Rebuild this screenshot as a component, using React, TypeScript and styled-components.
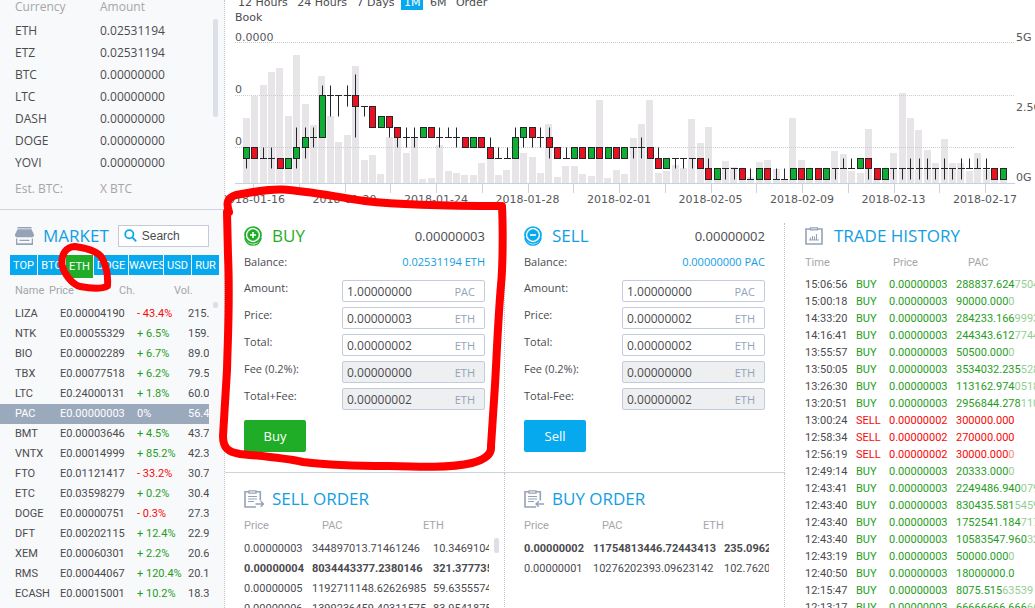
import React from 'react';
import styled, { createGlobalStyle, css } from 'styled-components';

const BLUE = '#06a8ee';
const TITLE_BLUE = '#129ee2';
const GREEN = '#1fad28';
const TEXT_GREEN = '#1f9e24';
const RED = '#f80808';
const INK = '#4b4b4f';
const MUTED = '#a6a6a8';
const STEEL = '#94a3b8';
const LINE = '#ccd4dc';

const GlobalStyle = createGlobalStyle`
  * { box-sizing: border-box; }
  body {
    margin: 0;
    background: #fff;
    color: ${INK};
    font-family: "Open Sans", "Noto Sans", sans-serif;
    font-size: 12px;
  }
  button, input { font: inherit; color: inherit; }
  h2 { margin: 0; padding: 0; font-weight: 400; }
`;

const Page = styled.div`
  position: relative;
  display: grid;
  grid-template-columns: 225px minmax(0, 1fr);
  height: 100vh;
  overflow: hidden;
`;

const Sidebar = styled.aside`
  background: #f8f9fa;
  border-right: 1px dotted #c4c8cc;
  overflow: hidden;
`;

const Main = styled.main`
  min-width: 0;
  overflow: hidden;
`;

/* ---------- tables ---------- */

const Table = styled.table`
  display: block;
  white-space: nowrap;
  overflow: hidden;
  tbody, thead { display: block; }
`;

const Row = styled.tr<{ $cols: string; $height: number; $bold?: boolean; $selected?: boolean }>`
  display: grid;
  grid-template-columns: ${p => p.$cols};
  line-height: ${p => p.$height}px;
  font-weight: ${p => (p.$bold ? 700 : 400)};
  ${p => p.$selected && css`
    background: #9ba9bd;
    && td { color: #fff; }
  `}
`;

const Head = styled.th`
  padding: 0;
  font-weight: 400;
  text-align: left;
  color: ${MUTED};
`;

type Tone = 'up' | 'down' | 'plain';
const toneColor = { up: TEXT_GREEN, down: RED, plain: INK };

const Cell = styled.td<{ $tone?: Tone }>`
  padding: 0;
  color: ${p => toneColor[p.$tone ?? 'plain']};
`;

const Faded = styled.span`
  opacity: 0.5;
`;

const Thumb = styled.span<{ $top: number; $right: number; $height: number }>`
  position: absolute;
  top: ${p => p.$top}px;
  right: ${p => p.$right}px;
  width: 5px;
  height: ${p => p.$height}px;
  border-radius: 2px;
  background: #dcdfe8;
`;

/* ---------- sidebar ---------- */

const Wallet = styled.section`
  position: relative;
  height: 210px;
  padding-left: 15px;
  border-bottom: 1px solid ${LINE};
  thead tr { margin-bottom: 6px; }
`;

const WalletFoot = styled.div`
  display: grid;
  grid-template-columns: 85px 1fr;
  margin-top: 4px;
  line-height: 22px;
  color: ${MUTED};
`;

const MarketHead = styled.div`
  display: flex;
  align-items: center;
  gap: 9px;
  height: 23px;
  margin: 14px 15px 8px;
`;

const Title = styled.h2<{ $color?: string }>`
  font-size: 17px;
  line-height: 22px;
  color: ${p => p.$color ?? TITLE_BLUE};
  white-space: nowrap;
`;

const SearchBox = styled.label`
  display: flex;
  align-items: center;
  gap: 5px;
  flex: 1;
  min-width: 0;
  height: 22px;
  padding: 0 5px;
  background: #fff;
  border: 1px solid #c5cbd6;
  svg { flex: none; }
  input {
    width: 100%;
    min-width: 0;
    padding: 0;
    border: 0;
    outline: 0;
    background: none;
    font: 12px "Liberation Sans", sans-serif;
    &::placeholder { color: ${INK}; opacity: 1; }
  }
`;

const CoinTabs = styled.nav`
  display: flex;
  gap: 1px;
  height: 23px;
  margin: 0 5px 1px 10px;
`;

const CoinTab = styled.button<{ $active?: boolean; $wide?: boolean }>`
  width: ${p => (p.$wide ? 34 : 27)}px;
  height: ${p => (p.$active ? 23 : 20)}px;
  padding: 0;
  border: 0;
  background: ${p => (p.$active ? GREEN : BLUE)};
  color: #fff;
  font: 11px "Roboto", sans-serif;
  white-space: nowrap;
`;

const MarketList = styled.div`
  position: relative;
  padding-right: 15px;
  font: 11px "Roboto", sans-serif;
  thead tr { margin-bottom: 1px; }
  th:first-child, td:first-child { padding-left: 15px; }
`;

/* ---------- chart ---------- */

const ChartPanel = styled.section`
  padding-top: 1px;
  margin-top: -6px;
`;

const Ranges = styled.nav`
  width: 270px;
  padding-left: 10px;
  font: 11px/15px "DejaVu Sans", sans-serif;
`;

const Range = styled.a<{ $active?: boolean }>`
  padding: 1px 3px;
  color: ${p => (p.$active ? '#fff' : INK)};
  background: ${p => (p.$active ? BLUE : 'none')};
  text-decoration: none;
`;

const ChartSvg = styled.svg`
  display: block;
  width: 100%;
  overflow: visible;
  text { font: 11px "DejaVu Sans", sans-serif; fill: #58585c; }
`;

/* ---------- panels ---------- */

const Panels = styled.div`
  display: grid;
  grid-template-columns: minmax(0, 28fr) minmax(0, 28fr) minmax(0, 25fr);
  grid-template-rows: 250px 400px;
  margin-top: 15px;
`;

const Panel = styled.section`
  position: relative;
  padding: 2px 19px 0;
  border-right: 1px dotted #bcc3cc;
  border-bottom: 1px solid ${LINE};
`;

const OrderPanel = styled(Panel)`
  padding: 15px 15px 0 19px;
`;

const TradesPanel = styled.section`
  grid-column: 3;
  grid-row: 1 / span 2;
  padding: 2px 0 0 20px;
  overflow: hidden;
`;

const PanelHead = styled.header<{ $gap?: number }>`
  display: flex;
  align-items: center;
  gap: ${p => p.$gap ?? 8}px;
  height: 22px;
  output { margin-left: auto; font-size: 13px; }
`;

const Balance = styled.div`
  display: flex;
  justify-content: space-between;
  margin-bottom: 8px;
  padding-top: 5px;
  font-size: 11px;
  line-height: 20px;
  b { font-weight: 400; color: ${TITLE_BLUE}; }
`;

const Field = styled.div`
  display: flex;
  justify-content: space-between;
  height: 22px;
  margin-bottom: 5px;
  label { font-size: 11px; line-height: 16px; }
`;

const Entry = styled.div<{ $locked?: boolean }>`
  display: flex;
  align-items: center;
  width: 143px;
  padding: 0 9px 0 4px;
  border: 1px solid #c3ccdd;
  border-radius: 2px;
  background: ${p => (p.$locked ? '#eeeff1' : '#fff')};
  input {
    flex: 1;
    min-width: 0;
    padding: 0;
    border: 0;
    outline: 0;
    background: none;
    font-size: 12px;
  }
  span { font-size: 11px; color: ${STEEL}; }
`;

const Submit = styled.button<{ $color: string }>`
  width: 62px;
  height: 32px;
  margin-top: 5px;
  border: 0;
  border-radius: 2px;
  background: ${p => p.$color};
  color: #fff;
  font-size: 13px;
`;

const Listing = styled.div`
  padding-top: 6px;
  font: 11px "Roboto", sans-serif;
  thead tr { margin-bottom: 3px; }
`;

const Annotation = styled.svg`
  position: absolute;
  left: 0;
  top: 0;
  pointer-events: none;
`;

/* ---------- icons ---------- */

const StoreIcon = () => (
  <svg width="19" height="18" viewBox="0 0 19 18" fill={STEEL} aria-hidden="true">
    <path d="M2.500 0h14v1.500h-14z" />
    <path d="M2.500 2.300h14L19 7.500V9H0V7.500z" />
    <path d="M0 9h19c-.6 1-1.600 1.200-2.400 1.200H2.400C1.600 10.200.6 10 0 9z" />
    <path d="M1 11.500h1.300v4.800h14.400v-4.800H18V18H1zM4.500 12.800h10v1.200h-10z" />
  </svg>
);

const SearchIcon = () => (
  <svg width="13" height="13" viewBox="0 0 13 13" fill="none" stroke={BLUE} strokeWidth="1.800" aria-hidden="true">
    <circle cx="5.300" cy="5.300" r="4.100" />
    <path d="M8.400 8.400l3.800 3.900" />
  </svg>
);

const CoinIcon = ({ color, plus }: { color: string; plus?: boolean }) => (
  <svg width="20" height="20" viewBox="0 0 20 20" fill="none" stroke={color} aria-hidden="true">
    <circle cx="9" cy="9" r="8" strokeWidth="1.700" />
    <circle cx="9" cy="9" r="5.400" fill={color} strokeWidth="0.600" />
    <path d="M.7 12c1.400 4.600 4.600 7.200 8.300 7.200s6.900-2.600 8.300-7.200" strokeWidth="1.200" />
    <path d={plus ? 'M9 6v6M6 9h6' : 'M6 9h6'} stroke="#fff" strokeWidth="1.600" />
  </svg>
);

const OrderIcon = ({ out }: { out?: boolean }) => (
  <svg width="20" height="18" viewBox="0 0 20 18" fill="none" stroke={STEEL} strokeWidth="1.600" aria-hidden="true">
    <path d="M5 1.800H1V17h11M12 1.800h4.300v8.700" />
    <path d="M5 .8h7v2.400H5z" strokeWidth="1.300" />
    <path d="M4 6.500h9M4 9h9M4 11.500h6" strokeWidth="1.100" />
    <path d={out ? 'M11.500 14h8M16.700 11.300l2.800 2.700-2.800 2.700' : 'M20 14h-8M14.800 11.300L12 14l2.800 2.700'} strokeWidth="1.400" />
  </svg>
);

const HistoryIcon = () => (
  <svg width="18" height="18" viewBox="0 0 18 18" fill="none" stroke={STEEL} strokeWidth="1.600" aria-hidden="true">
    <path d="M1 2h16v15H1z" />
    <path d="M5.500 .8h7v2h-7z" strokeWidth="1.200" fill="#fff" />
    <path d="M4 13h10M5.500 12.500v-2M7.500 12.500V9M9.500 12.500v-3M11.500 12.500V7" strokeWidth="1.100" />
  </svg>
);

/* ---------- data ---------- */

const wallet = [
  ['ETH', '0.02531194'], ['ETZ', '0.02531194'], ['BTC', '0.00000000'], ['LTC', '0.00000000'],
  ['DASH', '0.00000000'], ['DOGE', '0.00000000'], ['YOVI', '0.00000000'],
];

const coins = ['TOP', 'BTC', 'ETH', 'DOGE', 'WAVES', 'USD', 'RUR'];

const market = [
  ['LIZA', 'E0.00004190', '- 43.4%', '215.'], ['NTK', 'E0.00055329', '+ 6.5%', '159.9'],
  ['BIO', 'E0.00002289', '+ 6.7%', '89.04'], ['TBX', 'E0.00077518', '+ 6.2%', '79.54'],
  ['LTC', 'E0.24000131', '+ 1.8%', '60.09'], ['PAC', 'E0.00000003', '0%', '56.49'],
  ['BMT', 'E0.00003646', '+ 4.5%', '43.7'], ['VNTX', 'E0.00014999', '+ 85.2%', '42.3'],
  ['FTO', 'E0.01121417', '- 33.2%', '30.79'], ['ETC', 'E0.03598279', '+ 0.2%', '30.46'],
  ['DOGE', 'E0.00000751', '- 0.3%', '27.35'], ['DFT', 'E0.00202115', '+ 12.4%', '22.96'],
  ['XEM', 'E0.00060301', '+ 2.2%', '20.6'], ['RMS', 'E0.00044067', '+ 120.4%', '20.1'],
  ['ECASH', 'E0.00015001', '+ 10.2%', '18.39'],
];

const trades = [
  ['15:06:56', 'BUY', '288837.624', '7504'], ['15:00:18', 'BUY', '90000.000', '0'],
  ['14:33:20', 'BUY', '284233.166', '9993'], ['14:16:41', 'BUY', '244343.612', '7744'],
  ['13:55:57', 'BUY', '50500.000', '0'], ['13:50:05', 'BUY', '3534032.235', '528'],
  ['13:26:30', 'BUY', '113162.974', '0518'], ['13:20:51', 'BUY', '2956844.278', '110'],
  ['13:00:24', 'SELL', '300000.000', ''], ['12:58:34', 'SELL', '270000.000', ''],
  ['12:56:19', 'SELL', '30000.000', '0'], ['12:49:14', 'BUY', '20333.000', '0'],
  ['12:43:41', 'BUY', '2249486.940', '079'], ['12:43:40', 'BUY', '830435.581', '5459'],
  ['12:43:40', 'BUY', '1752541.184', '717'], ['12:43:40', 'BUY', '10583547.960', '32'],
  ['12:43:19', 'BUY', '50000.000', '0'], ['12:40:50', 'BUY', '18000000.0', ''],
  ['12:15:47', 'BUY', '8075.515', '63539'], ['12:13:17', 'BUY', '66666666.666', '66'],
];

const sellOrders = [
  ['0.00000003', '344897013.71461246', '10.3469104'], ['0.00000004', '8034443377.2380146', '321.377735'],
  ['0.00000005', '1192711148.62626985', '59.6355574'], ['0.00000006', '1399236459.40311575', '83.9541875'],
];
const buyOrders = [
  ['0.00000002', '11754813446.72443413', '235.0962'], ['0.00000001', '10276202393.09623142', '102.76202'],
];

/* Each candle: kind (g rise, r fall, f flat), body low, body high, wick low, wick high. */
const candles = `g2313 r2323 f2223 f2213 r1212 g1212 g2315 g3425 f4435 g4849 f8869 f8868 f8879 r784A f7767
r5757 g5656 r5646 r4535 f4435 f4435 g4545 r4545 f4435 f4445 f4435 r3434 g3434 r3434 r2324 f2223 f2223 g2425
g4535 r4535 f4435 r3425 r2323 f2223 g2323 r2323 g2323 r2323 g2323 r2323 g2323 f3323 f3324 r2323 r1213 g1212
f2212 f2212 f2212 r1212 r0102 g0101 f1101 f1101 r0101 f0001 g0101 r0101 f0001 f0001 g0101 r0101 g0101 r0101
g0101 f1101 f1112 f1112 g1212 r1202 r0101 g0101 f1101 f1101 f1102 f1102 f1102 f1101 f1102 f1101 f1102 f1112
f1112 f1102 r0101 g0101`.split(/\s+/);

const volumes = [
  65, 87, 98, 111, 115, 67, 128, 79, 58, 107, 67, 41, 48, 117, 23, 28, 9, 46, 46, 30, 45, 4, 5, 38, 12, 10, 8, 8,
  20, 33, 8, 13, 26, 30, 26, 10, 59, 6, 17, 17, 9, 7, 83, 5, 13, 9, 45, 59, 83, 10, 12, 18, 15, 64, 40, 56, 10,
  22, 16, 10, 6, 21, 23, 14, 3, 65, 23, 10, 6, 10, 32, 29, 12, 10, 54, 5, 6, 30, 90, 65, 53, 33, 20, 44, 20, 20,
  12, 30, 13, 8, 10,
];

const dates = ['2018-01-16', '2018-01-20', '2018-01-24', '2018-01-28', '2018-02-01', '2018-02-05', '2018-02-09', '2018-02-13', '2018-02-17'];

const PITCH = 8.408;
const level = (c: string) => Math.round(153.7 - 10.43 * parseInt(c, 16)) + 0.5;

const PriceChart = () => (
  <ChartSvg viewBox="0 0 810 183" role="img" aria-label="Price and volume">
    {volumes.map((v, i) => (
      <rect key={i} x={Math.round(21.5 + i * PITCH - 3.7)} y={158 - v} width="7" height={v} fill="#e8e5e9" />
    ))}
    {[17.5, 70.5, 122.5].map(y => (
      <path key={y} d={`M10 ${y}H790`} stroke="#c9cdd0" strokeDasharray="1 1" />
    ))}
    <path d="M10 158.500H790" stroke="#c3d2df" />
    {Array.from({ length: 17 }, (_, i) => (
      <path key={i} d={`M${Math.round(28 + i * 45.75) + 0.5} 159v9`} stroke="#ccd3da" />
    ))}
    {candles.map((c, i) => {
      const x = Math.round(21 + i * PITCH) + 0.5;
      const [kind, lo, hi, wickLo, wickHi] = c;
      return (
        <g key={i} stroke="#26262a">
          <path d={`M${x} ${level(wickLo)}V${level(wickHi)}`} />
          {kind === 'f'
            ? <path d={`M${x - 3.5} ${level(lo)}h7`} />
            : <rect x={x - 3} y={level(hi)} width="6" height={level(lo) - level(hi)} fill={kind === 'g' ? '#0eb033' : '#ea1220'} />}
        </g>
      );
    })}
    <text x="10" y="16">0.0000</text>
    <text x="10" y="68">0</text>
    <text x="10" y="120">0</text>
    <text x="791" y="16">5G</text>
    <text x="791" y="86">2.5G</text>
    <text x="791" y="156">0G</text>
    {dates.map((d, i) => (
      <text key={d} x={28 + i * 91.5} y="178" textAnchor="middle">{d}</text>
    ))}
  </ChartSvg>
);

interface TradeFormProps {
  side: 'buy' | 'sell';
  price: string;
  balance: string;
  totalLabel: string;
}

const TradeForm = ({ side, price, balance, totalLabel }: TradeFormProps) => {
  const buy = side === 'buy';
  const fields = [
    ['Amount:', '1.00000000', 'PAC'], ['Price:', price, 'ETH'], ['Total:', '0.00000002', 'ETH'],
    ['Fee (0.2%):', '0.00000000', 'ETH'], [totalLabel, '0.00000002', 'ETH'],
  ];
  return (
    <Panel>
      <PanelHead>
        <CoinIcon color={buy ? GREEN : BLUE} plus={buy} />
        <Title $color={buy ? GREEN : TITLE_BLUE}>{buy ? 'BUY' : 'SELL'}</Title>
        <output>{price}</output>
      </PanelHead>
      <Balance><span>Balance:</span><b>{balance}</b></Balance>
      {fields.map(([label, value, unit], i) => (
        <Field key={label}>
          <label htmlFor={`${side}-${i}`}>{label}</label>
          <Entry $locked={i > 2}>
            <input id={`${side}-${i}`} defaultValue={value} readOnly={i > 2} />
            <span>{unit}</span>
          </Entry>
        </Field>
      ))}
      <Submit $color={buy ? GREEN : BLUE}>{buy ? 'Buy' : 'Sell'}</Submit>
    </Panel>
  );
};

const OrderBook = ({ title, out, rows, boldRow, cols }: { title: string; out?: boolean; rows: string[][]; boldRow: number; cols: string }) => (
  <OrderPanel>
    <PanelHead><OrderIcon out={out} /><Title>{title}</Title></PanelHead>
    <Listing>
      <Table>
        <thead>
          <Row $cols="78px 101px 1fr" $height={20}><Head>Price</Head><Head>PAC</Head><Head>ETH</Head></Row>
        </thead>
        <tbody>
          {rows.map((r, i) => (
            <Row key={r[0]} $cols={cols} $height={20} $bold={i === boldRow}>
              {r.map(v => <Cell key={v}>{v}</Cell>)}
            </Row>
          ))}
        </tbody>
      </Table>
    </Listing>
    {out && <Thumb $top={65} $right={5} $height={15} />}
  </OrderPanel>
);

export default function App() {
  return (
    <Page>
      <GlobalStyle />
      <Sidebar>
        <Wallet>
          <Table>
            <thead><Row $cols="85px 1fr" $height={14}><Head>Currency</Head><Head>Amount</Head></Row></thead>
            <tbody>
              {wallet.map(([name, amount]) => (
                <Row key={name} $cols="85px 1fr" $height={22}><Cell>{name}</Cell><Cell>{amount}</Cell></Row>
              ))}
            </tbody>
          </Table>
          <WalletFoot><span>Est. BTC:</span><span>X BTC</span></WalletFoot>
          <Thumb $top={19} $right={6} $height={98} />
        </Wallet>

        <MarketHead>
          <StoreIcon />
          <Title>MARKET</Title>
          <SearchBox><SearchIcon /><input aria-label="Search" placeholder="Search" /></SearchBox>
        </MarketHead>
        <CoinTabs>
          {coins.map(c => (
            <CoinTab key={c} $active={c === 'ETH'} $wide={c.length > 3}>{c}</CoinTab>
          ))}
        </CoinTabs>
        <MarketList>
          <Table>
            <thead>
              <Row $cols="49px 70px 55px 1fr" $height={24}><Head>Name</Head><Head>Price</Head><Head>Ch.</Head><Head>Vol.</Head></Row>
            </thead>
            <tbody>
              {market.map(([name, price, change, vol]) => (
                <Row key={name} $cols="60px 77px 51px minmax(0, 1fr)" $height={20} $selected={name === 'PAC'}>
                  <Cell>{name}</Cell>
                  <Cell>{price}</Cell>
                  <Cell $tone={change[0] === '-' ? 'down' : 'up'}>{change}</Cell>
                  <Cell>{vol}</Cell>
                </Row>
              ))}
            </tbody>
          </Table>
          <Thumb $top={23} $right={6} $height={6} />
        </MarketList>
      </Sidebar>

      <Main>
        <ChartPanel>
          <Ranges>
            <Range href="#12h">12 Hours</Range> <Range href="#24h">24 Hours</Range> <Range href="#7d">7 Days</Range>{' '}
            <Range href="#1m" $active>1M</Range> <Range href="#6m">6M</Range> <Range href="#book">Order Book</Range>
          </Ranges>
          <PriceChart />
        </ChartPanel>

        <Panels>
          <TradeForm side="buy" price="0.00000003" balance="0.02531194 ETH" totalLabel="Total+Fee:" />
          <TradeForm side="sell" price="0.00000002" balance="0.00000000 PAC" totalLabel="Total-Fee:" />
          <OrderBook title="SELL ORDER" out rows={sellOrders} boldRow={1} cols="68px 121px minmax(0, 1fr)" />
          <OrderBook title="BUY ORDER" rows={buyOrders} boldRow={0} cols="69px 131px minmax(0, 1fr)" />
          <TradesPanel>
            <PanelHead $gap={11}><HistoryIcon /><Title>TRADE HISTORY</Title></PanelHead>
            <Listing>
              <Table>
                <thead>
                  <Row $cols="88px 75px 1fr" $height={20}><Head>Time</Head><Head>Price</Head><Head>PAC</Head></Row>
                </thead>
                <tbody>
                  {trades.map(([time, kind, amount, tail], i) => {
                    const tone = kind === 'BUY' ? 'up' : 'down';
                    return (
                      <Row key={i} $cols="51px 33px 67px minmax(0, 1fr)" $height={17}>
                        <Cell>{time}</Cell>
                        <Cell $tone={tone}>{kind}</Cell>
                        <Cell $tone={tone}>{kind === 'BUY' ? '0.00000003' : '0.00000002'}</Cell>
                        <Cell $tone={tone}>{amount}<Faded>{tail}</Faded></Cell>
                      </Row>
                    );
                  })}
                </tbody>
              </Table>
            </Listing>
          </TradesPanel>
        </Panels>
      </Main>

      <Annotation width="520" height="480" viewBox="0 0 520 480" fill="none" stroke="#fe0000" strokeWidth="8" strokeLinecap="round" strokeLinejoin="round" aria-hidden="true">
        <path d="M229 212C226 203 227 198 236 195C255 192 265 189 282 189.500C310 191 335 197 365 201C400 205 455 206 502 206C503 225 503 265 501 285C498 320 497 350 495 385L491 446C492 455 484 460 472 463C450 468 420 467 387 466C340 466 320 464 303 462C285 458 262 456 240 454C228 452 223 448 223 436L227 370C228 330 230 300 228 255L227 212" />
        <path strokeWidth="7" d="M62 265C61 254 66 247 75 246.500C90 249 100 252 103 260C107 268 108 278 107.500 286C100 290 88 288 80 286.500C72 284 64 274 62 265Z" />
      </Annotation>
    </Page>
  );
}
